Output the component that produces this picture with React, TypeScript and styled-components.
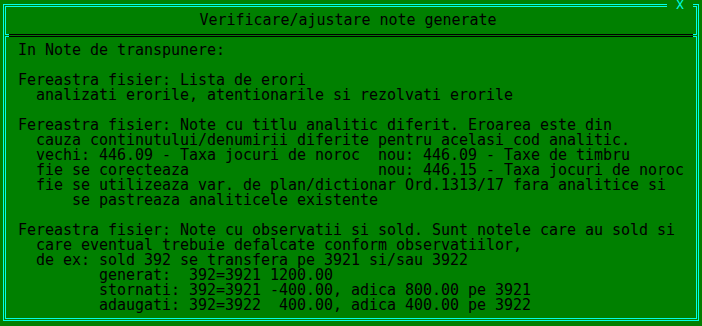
import React from "react";
import styled, { createGlobalStyle } from "styled-components";

const CYAN = "#00ffe6";
const GREEN = "#008000";

const Global = createGlobalStyle`
  html, body { margin: 0; padding: 0; background: ${GREEN}; }
  body { width: 702px; height: 326px; overflow: hidden; }
`;

const Screen = styled.div`
  width: 702px;
  height: 326px;
  box-sizing: border-box;
  padding: 4px 0 0 3px;
  background: ${GREEN};
  font-family: "DejaVu Sans Mono", "Liberation Mono", monospace;
  font-size: 15px;
  line-height: 15px;
  letter-spacing: -0.03px;
  color: #000;
`;

const Window = styled.section`
  position: relative;
  box-sizing: border-box;
  width: 696px;
  height: 317px;
  border: 3px double ${CYAN};
  display: flex;
  flex-direction: column;
`;

const TitleBar = styled.header`
  height: 27px;
  box-sizing: border-box;
  padding: 6px 6px 6px 0;
  text-align: center;
  white-space: pre;
`;

const CloseButton = styled.span`
  position: absolute;
  top: -7px;
  right: 3px;
  width: 26px;
  height: 10px;
  background: ${GREEN};
  color: ${CYAN};
  font-size: 12.5px;
  line-height: 10px;
  text-align: center;
`;

const Separator = styled.div`
  display: flex;
  height: 3px;
  margin: 0 -1px;
`;

const Stub = styled.span`
  width: 4px;
  box-sizing: border-box;
  border-top: 1px solid ${CYAN};
  border-bottom: 1px solid ${CYAN};
  background: ${GREEN};
`;

const Rule = styled.span`
  flex: 1;
  box-sizing: border-box;
  border-top: 1px solid #000;
  border-bottom: 1px solid #000;
`;

const Body = styled.div`
  padding: 6px 0 0 12px;
  display: flex;
  flex-direction: column;
`;

const Line = styled.div`
  height: 15px;
  white-space: pre;
`;

const lines = [
  "In Note de transpunere:",
  "",
  "Fereastra fisier: Lista de erori",
  "  analizati erorile, atentionarile si rezolvati erorile",
  "",
  "Fereastra fisier: Note cu titlu analitic diferit. Eroarea este din",
  "  cauza continutului/denumirii diferite pentru acelasi cod analitic.",
  "  vechi: 446.09 - Taxa jocuri de noroc  nou: 446.09 - Taxe de timbru",
  "  fie se corecteaza                     nou: 446.15 - Taxa jocuri de noroc",
  "  fie se utilizeaza var. de plan/dictionar Ord.1313/17 fara analitice si",
  "      se pastreaza analiticele existente",
  "",
  "Fereastra fisier: Note cu observatii si sold. Sunt notele care au sold si",
  "  care eventual trebuie defalcate conform observatiilor,",
  "  de ex: sold 392 se transfera pe 3921 si/sau 3922",
  "         generat:  392=3921 1200.00",
  "         stornati: 392=3921 -400.00, adica 800.00 pe 3921",
  "         adaugati: 392=3922  400.00, adica 400.00 pe 3922",
];

export default function App() {
  return (
    <>
      <Global />
      <Screen>
        <Window>
          <CloseButton>X</CloseButton>
          <TitleBar>Verificare/ajustare note generate</TitleBar>
          <Separator>
            <Stub />
            <Rule />
            <Stub />
          </Separator>
          <Body>
            {lines.map((l, i) => (
              <Line key={i}>{l}</Line>
            ))}
          </Body>
        </Window>
      </Screen>
    </>
  );
}
